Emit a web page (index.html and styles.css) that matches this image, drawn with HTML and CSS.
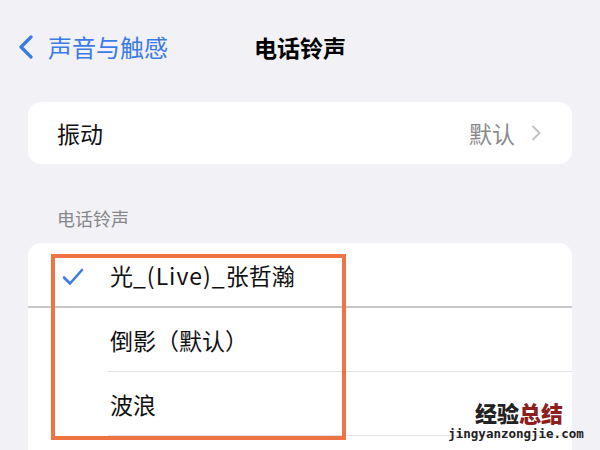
FILE: index.html
```html
<!DOCTYPE html>
<html lang="zh-CN">
<head>
<meta charset="utf-8">
<link rel="stylesheet" href="styles.css">
</head>
<body>
<div class="page">
  <header class="nav">
    <div class="back">
      <svg class="back-icon" width="16" height="24" viewBox="0 0 16 24"><path d="M13 2 L3 12 L13 22" fill="none" stroke="#3b7be8" stroke-width="3.2" stroke-linecap="round" stroke-linejoin="round"/></svg>
      <span class="back-text">声音与触感</span>
    </div>
    <div class="title">电话铃声</div>
    <div></div>
  </header>

  <section class="card card-vib">
    <div class="row row-vib">
      <span class="label">振动</span>
      <span class="value">默认</span>
      <svg class="chev" width="11" height="16" viewBox="0 0 11 16"><path d="M2 1.5 L8.5 8 L2 14.5" fill="none" stroke="#c4c4c7" stroke-width="2" stroke-linecap="round" stroke-linejoin="round"/></svg>
    </div>
  </section>

  <div class="section-title">电话铃声</div>

  <section class="card card-tones">
    <div class="tone tone-first">
      <svg class="check" width="22" height="18" viewBox="0 0 22 18"><path d="M2 9.5 L8 15.5 L20 2" fill="none" stroke="#3b7be8" stroke-width="2.6" stroke-linecap="round" stroke-linejoin="round"/></svg>
      <span class="tone-name">光<span class="latin">_(Live)_</span>张哲瀚</span>
    </div>
    <div class="sep-strong"></div>
    <div class="tone"><span class="tone-name">倒影（默认）</span></div>
    <div class="sep"></div>
    <div class="tone"><span class="tone-name">波浪</span></div>
    <div class="sep"></div>
    <div class="tone"></div>
    <div class="highlight"></div>
  </section>

  <div class="watermark">
    <div class="wm-cn"><span class="wm-dark">经验</span><span class="wm-red">总结</span></div>
    <div class="wm-url">jingyanzongjie.com</div>
  </div>
</div>
</body>
</html>
```

FILE: styles.css
```css
html, body {
  margin: 0;
  padding: 0;
}
body {
  width: 600px;
  height: 450px;
  overflow: hidden;
  background: #f2f1f6;
  font-family: "Noto Sans CJK SC", "Noto Sans", sans-serif;
  color: #111;
}
.page {
  position: relative;
  width: 600px;
  height: 450px;
  overflow: hidden;
}
.nav {
  height: 94px;
  display: grid;
  grid-template-columns: 1fr auto 1fr;
  align-items: center;
}
.back {
  display: flex;
  align-items: center;
  padding-left: 18px;
  gap: 14px;
  color: #3b7be8;
}
.back-icon {
  display: block;
}
.back-text {
  font-size: 24px;
  line-height: 28px;
}
.title {
  font-size: 23px;
  line-height: 28px;
  font-weight: 700;
  color: #000;
}
.card {
  margin: 0 28px;
  background: #fff;
  border-radius: 13px;
}
.card-vib {
  margin-top: 8px;
  height: 62px;
}
.row {
  display: flex;
  align-items: center;
  height: 100%;
  padding: 0 30px 0 29px;
}
.label {
  font-size: 23px;
  line-height: 28px;
  flex: 1;
}
.value {
  font-size: 23px;
  line-height: 28px;
  color: #8a8a8e;
  margin-right: 16px;
}
.chev {
  display: block;
}
.section-title {
  font-size: 18px;
  line-height: 22px;
  color: #86868b;
  padding: 43px 0 14px 57px;
}
.card-tones {
  position: relative;
  height: 207px;
  border-radius: 13px 13px 0 0;
}
.tone {
  height: 63px;
  display: flex;
  align-items: center;
  padding-left: 82px;
  position: relative;
}
.check {
  position: absolute;
  left: 34px;
  top: 25px;
}
.tone-name {
  font-size: 23px;
  line-height: 28px;
  color: #111;
}
.latin {
  letter-spacing: 1px;
}
.sep-strong {
  height: 2px;
  background: #c8c8ca;
}
.sep {
  height: 1px;
  margin-left: 80px;
  background: #e3e3e6;
}
.highlight {
  position: absolute;
  left: 23px;
  top: 11px;
  width: 287px;
  height: 178px;
  border: 4px solid #ef7444;
}
.watermark {
  position: absolute;
  left: 446px;
  top: 401px;
  width: 140px;
  text-align: center;
}
.wm-cn {
  font-size: 22px;
  line-height: 22px;
  font-weight: 900;
  padding-left: 6px;
}
.wm-dark { color: #222; }
.wm-red { color: #8e1f1f; }
.wm-url {
  font-family: "DejaVu Sans Mono", monospace;
  font-size: 12.5px;
  line-height: 13px;
  font-weight: 700;
  color: #222;
  margin-top: 4px;
}
```
